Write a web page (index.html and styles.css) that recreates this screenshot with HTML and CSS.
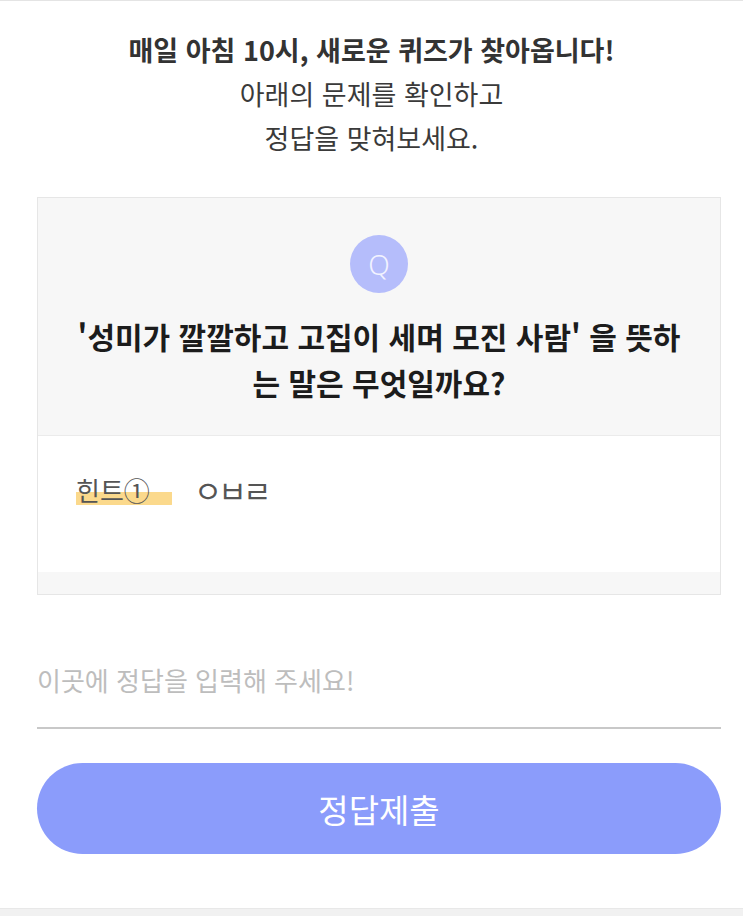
FILE: index.html
```html
<!DOCTYPE html>
<html lang="ko">
<head>
    <meta charset="utf-8">
    <title>오늘의 퀴즈</title>
    <link rel="stylesheet" href="styles.css">
</head>
<body>
    <div class="intro">
        <p class="intro-strong">매일 아침 10시, 새로운 퀴즈가 찾아옵니다!</p>
        <p>아래의 문제를 확인하고</p>
        <p>정답을 맞혀보세요.</p>
    </div>

    <div class="quiz">
        <div class="card">
            <div class="question">
                <div class="q-badge">Q</div>
                <h2>'성미가 깔깔하고 고집이 세며 모진 사람' 을 뜻하<br>는 말은 무엇일까요?</h2>
            </div>
            <div class="hint">
                <span class="hint-label">힌트①</span>
                <span class="hint-text">ㅇㅂㄹ</span>
            </div>
            <div class="card-foot"></div>
        </div>

        <input type="text" class="answer" placeholder="이곳에 정답을 입력해 주세요!">
        <button class="submit">정답제출</button>
    </div>

    <div class="page-foot"></div>
</body>
</html>
```

FILE: styles.css
```css
body {
    margin: 0;
    font-family: "Noto Sans CJK KR", "Noto Sans", sans-serif;
    background-color: #fff;
    border-top: 1px solid #e4e4e4;
    color: #3a3a3a;
}
.intro {
    padding-top: 27px;
    text-align: center;
    font-size: 27px;
    line-height: 44px;
}
.intro p {
    margin: 0;
}
.intro-strong {
    font-weight: 700;
    color: #333;
}
.quiz {
    padding: 0 22px 0 37px;
}
.card {
    margin-top: 37px;
    border: 1px solid #e6e6e6;
}
.question {
    background-color: #f7f7f7;
    padding: 37px 10px 30px;
    text-align: center;
    border-bottom: 1px solid #ebebeb;
}
.q-badge {
    width: 58px;
    height: 58px;
    margin: 0 auto;
    border-radius: 50%;
    background-color: #b5bdfb;
    color: #f2f3ff;
    font-family: "Noto Sans", sans-serif;
    font-weight: 300;
    font-size: 28px;
    line-height: 58px;
}
.question h2 {
    margin: 20px 0 0;
    font-size: 30px;
    font-weight: 700;
    line-height: 46px;
    color: #1c1c1c;
}
.hint {
    background-color: #fff;
    padding: 37px 38px 65px;
    display: flex;
    align-items: center;
    gap: 22px;
    line-height: 34px;
    color: #555;
}
.hint-label {
    font-size: 26px;
    padding-right: 22px;
    border-radius: 3px;
    background: linear-gradient(to bottom, transparent 56%, #fbd98c 56%, #fbd98c 94%, transparent 94%);
}
.hint-text {
    font-size: 31px;
    letter-spacing: -4px;
}
.card-foot {
    height: 22px;
    background-color: #f7f7f7;
}
.answer {
    display: block;
    width: 100%;
    height: 89px;
    box-sizing: border-box;
    margin-top: 45px;
    padding: 0 0 8px;
    border: none;
    border-bottom: 2px solid #c8c8c8;
    outline: none;
    background: transparent;
    font-family: inherit;
    font-size: 26px;
    color: #333;
}
.answer::placeholder {
    color: #bdbdbd;
}
.submit {
    display: block;
    width: 100%;
    height: 91px;
    margin-top: 34px;
    border: none;
    border-radius: 46px;
    background-color: #8b9cfb;
    color: #fff;
    font-family: inherit;
    font-size: 33px;
    cursor: pointer;
}
.page-foot {
    margin-top: 54px;
    height: 7px;
    background-color: #f1f1f1;
    border-top: 1px solid #e8e8e8;
}
```
